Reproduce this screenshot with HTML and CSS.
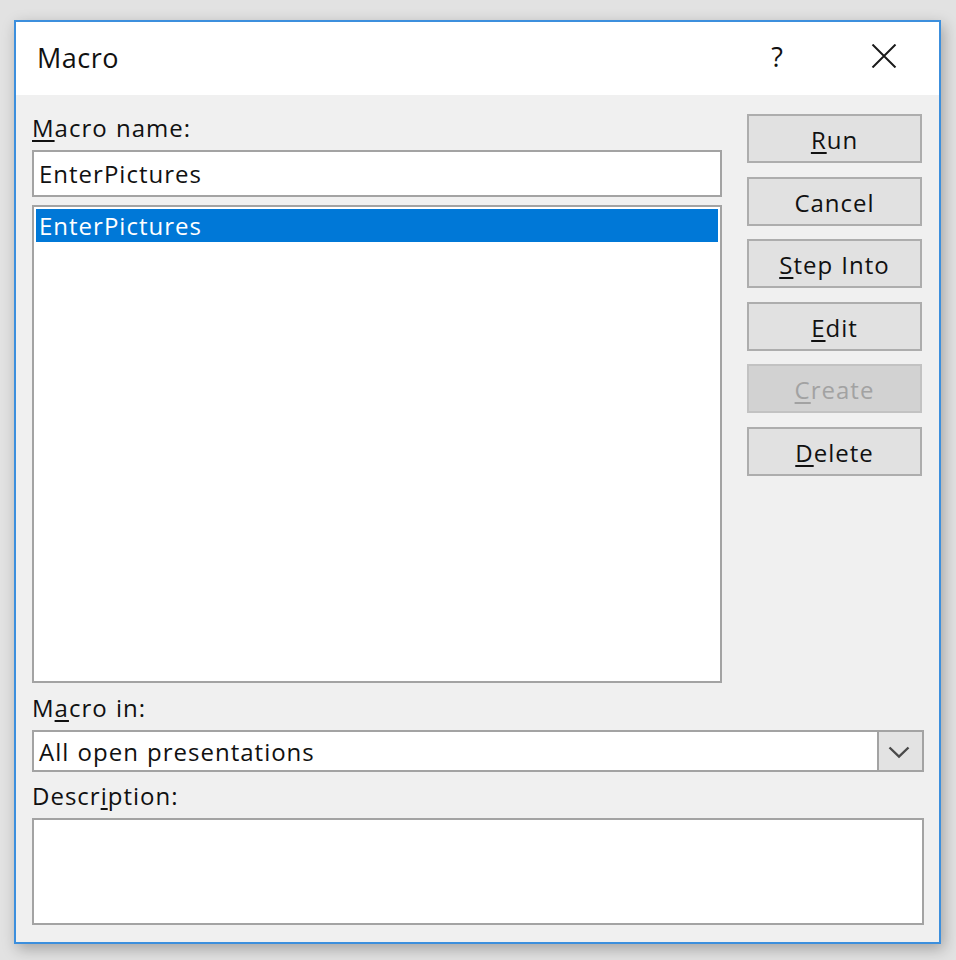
FILE: index.html
```html
<!DOCTYPE html>
<html lang="en">
<head>
<meta charset="utf-8">
<title>Macro</title>
<link rel="stylesheet" href="styles.css">
</head>
<body>
<div class="dialog">
  <div class="titlebar">
    <span class="title">Macro</span>
    <span class="help">?</span>
    <svg class="close" width="26" height="24" viewBox="0 0 26 24" aria-hidden="true">
      <path d="M1.5 0.5 L24.5 23.5 M24.5 0.5 L1.5 23.5" stroke="#1a1a1a" stroke-width="2" fill="none"/>
    </svg>
  </div>
  <div class="body">
    <div class="top">
      <div class="left">
        <div class="label label-first"><span class="ak">M</span>acro name:</div>
        <div class="input">EnterPictures</div>
        <div class="list">
          <div class="item selected">EnterPictures</div>
        </div>
      </div>
      <div class="buttons">
        <div class="btn"><span class="ak">R</span>un</div>
        <div class="btn">Cancel</div>
        <div class="btn"><span class="ak">S</span>tep Into</div>
        <div class="btn"><span class="ak">E</span>dit</div>
        <div class="btn disabled"><span class="ak">C</span>reate</div>
        <div class="btn"><span class="ak">D</span>elete</div>
      </div>
    </div>
    <div class="label label-in">M<span class="ak">a</span>cro in:</div>
    <div class="combo">
      <div class="combo-text">All open presentations</div>
      <div class="combo-btn">
        <svg width="22" height="13" viewBox="0 0 22 13" aria-hidden="true">
          <path d="M1.5 1.5 L11 10.5 L20.5 1.5" stroke="#4a4a4a" stroke-width="2.4" fill="none"/>
        </svg>
      </div>
    </div>
    <div class="label label-desc">Descr<span class="ak">i</span>ption:</div>
    <div class="desc"></div>
  </div>
</div>
</body>
</html>
```
FILE: styles.css
```css
* { box-sizing: border-box; }

html, body {
  margin: 0;
  padding: 0;
}

body {
  background: #e2e2e2;
  width: 956px;
  height: 960px;
  overflow: hidden;
  font-family: "Open Sans", "Noto Sans", "DejaVu Sans", sans-serif;
  color: #111111;
}

.dialog {
  margin: 20px 0 0 14px;
  width: 927px;
  height: 924px;
  border: 2px solid #3c8fdd;
  background: #f0f0f0;
  box-shadow: 3px 5px 14px rgba(0, 0, 0, 0.28);
  display: flex;
  flex-direction: column;
}

.titlebar {
  height: 73px;
  flex: none;
  background: #ffffff;
  display: flex;
  align-items: flex-start;
  padding: 17px 42px 0 21px;
}

.title {
  font-size: 27px;
  line-height: 37px;
  letter-spacing: 0.5px;
}

.help {
  margin-left: auto;
  font-size: 27px;
  line-height: 37px;
  margin-top: -1px;
}

.close {
  margin-left: 88px;
  margin-top: 5px;
}

.body {
  flex: 1;
  padding: 19px 15px 17px 16px;
  display: flex;
  flex-direction: column;
  font-size: 24px;
  letter-spacing: 1px;
  word-spacing: 1px;
}

.top {
  display: flex;
  gap: 25px;
  height: 569px;
}

.left {
  width: 690px;
  display: flex;
  flex-direction: column;
}

.label {
  height: 28px;
  line-height: 28px;
  white-space: nowrap;
}

.label-first {
  height: 36px;
}

.label-in {
  margin: 11px 0 8px;
}

.label-desc {
  margin: 10px 0 8px;
}

.ak {
  text-decoration: underline;
  text-decoration-thickness: 2px;
  text-underline-offset: 3px;
}

.input {
  height: 47px;
  background: #ffffff;
  border: 2px solid #a3a3a3;
  padding-left: 5px;
  display: flex;
  align-items: center;
}

.list {
  margin-top: 8px;
  height: 478px;
  background: #ffffff;
  border: 2px solid #a3a3a3;
  padding: 2px;
}

.item {
  height: 33px;
  line-height: 33px;
  padding-left: 3px;
}

.item.selected {
  background: #0078d7;
  color: #ffffff;
}

.buttons {
  width: 175px;
  display: flex;
  flex-direction: column;
  gap: 13.6px;
}

.btn {
  height: 49px;
  flex: none;
  background: #e1e1e1;
  border: 2px solid #adadad;
  display: flex;
  align-items: center;
  justify-content: center;
  padding-top: 2px;
}

.btn.disabled {
  background: #d2d2d2;
  border-color: #c2c2c2;
  color: #a2a2a2;
}

.combo {
  height: 42px;
  background: #ffffff;
  border: 2px solid #a3a3a3;
  display: flex;
}

.combo-text {
  flex: 1;
  padding-left: 5px;
  display: flex;
  align-items: center;
}

.combo-btn {
  width: 45px;
  background: #e3e3e3;
  border-left: 2px solid #a3a3a3;
  display: flex;
  align-items: center;
  justify-content: center;
  padding: 2px 4px 0 0;
}

.desc {
  height: 107px;
  background: #ffffff;
  border: 2px solid #a3a3a3;
}
```
